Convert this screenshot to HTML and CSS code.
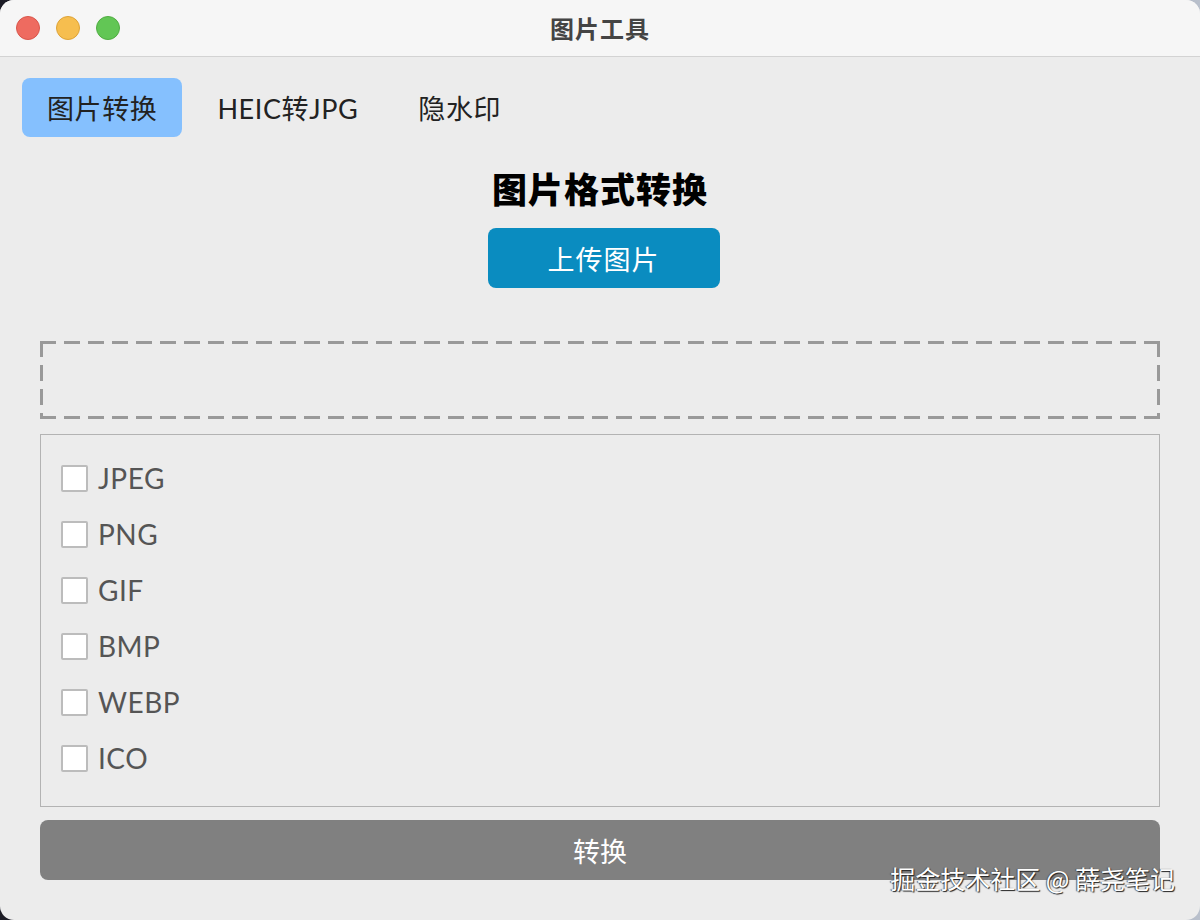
FILE: index.html
```html
<!DOCTYPE html>
<html lang="zh-CN">
<head>
    <meta charset="UTF-8">
    <meta name="viewport" content="width=device-width, initial-scale=1.0">
    <title>图片工具</title>
    <link rel="stylesheet" href="styles.css">
</head>
<body>
    <div class="window">
        <div class="titlebar">
            <div class="lights">
                <span class="light red"></span>
                <span class="light yellow"></span>
                <span class="light green"></span>
            </div>
            <div class="title">图片工具</div>
        </div>

        <div class="content">
            <div class="tabs">
                <div class="tab active">图片转换</div>
                <div class="tab">HEIC转JPG</div>
                <div class="tab">隐水印</div>
            </div>

            <h1 class="heading">图片格式转换</h1>
            <button class="upload-btn">上传图片</button>

            <div class="drop-zone"></div>

            <div class="format-list">
                <label class="format"><span class="check"></span>JPEG</label>
                <label class="format"><span class="check"></span>PNG</label>
                <label class="format"><span class="check"></span>GIF</label>
                <label class="format"><span class="check"></span>BMP</label>
                <label class="format"><span class="check"></span>WEBP</label>
                <label class="format"><span class="check"></span>ICO</label>
            </div>

            <button class="convert-btn">转换</button>
        </div>

        <div class="watermark">掘金技术社区 @ 薛尧笔记</div>
    </div>
</body>
</html>
```

FILE: styles.css
```css
html, body {
    margin: 0;
    padding: 0;
}
body {
    width: 1200px;
    height: 920px;
    background: linear-gradient(90deg, #1c1c26 0%, #4a4f5c 60%, #b9c0cc 100%);
    font-family: Lato, "Noto Sans CJK SC", sans-serif;
    overflow: hidden;
}
.window {
    position: relative;
    width: 1200px;
    height: 920px;
    background: #ececec;
    border-radius: 14px;
    overflow: hidden;
}
.titlebar {
    position: relative;
    height: 56px;
    background: #f6f6f6;
    border-bottom: 1px solid #d3d3d3;
    display: flex;
    align-items: center;
    justify-content: center;
}
.lights {
    position: absolute;
    left: 16px;
    top: 16px;
    display: flex;
    gap: 16px;
}
.light {
    width: 24px;
    height: 24px;
    border-radius: 50%;
    box-sizing: border-box;
}
.red {
    background: #ee6b60;
    border: 1px solid #d9564b;
}
.yellow {
    background: #f6be4f;
    border: 1px solid #dea337;
}
.green {
    background: #62c655;
    border: 1px solid #50ad42;
}
.title {
    font-family: "Noto Sans CJK SC", sans-serif;
    font-weight: 700;
    font-size: 24px;
    color: #444;
    letter-spacing: 1px;
    margin-top: -2px;
}
.content {
    padding: 21px 40px 0 40px;
    display: flex;
    flex-direction: column;
    align-items: center;
}
.tabs {
    align-self: flex-start;
    margin-left: -18px;
    display: flex;
    gap: 10px;
}
.tab {
    height: 59px;
    padding: 0 25px;
    border-radius: 8px;
    display: flex;
    align-items: center;
    font-size: 27px;
    color: #222;
    letter-spacing: 0.6px;
}
.tab.active {
    background: #85c0fe;
}
.heading {
    margin: 30px 0 0 0;
    height: 41px;
    line-height: 41px;
    font-family: "Noto Sans CJK SC", sans-serif;
    font-weight: 900;
    font-size: 35px;
    color: #000;
    letter-spacing: 1px;
}
.upload-btn {
    margin: 20px 0 0 7px;
    width: 232px;
    height: 60px;
    border: none;
    border-radius: 8px;
    background: #0a8cc0;
    color: #fff;
    font-family: "Noto Sans CJK SC", sans-serif;
    font-size: 27px;
    letter-spacing: 1px;
}
/* dashes drawn by hand: the browser's dashed border is too short */
.drop-zone {
    margin-top: 53px;
    width: 100%;
    height: 78px;
    box-sizing: border-box;
    background:
        linear-gradient(90deg, #999 16px, transparent 16px) top left / 24px 3px repeat-x,
        linear-gradient(90deg, #999 16px, transparent 16px) bottom left / 24px 3px repeat-x,
        linear-gradient(180deg, #999 16px, transparent 16px) top left / 3px 24px repeat-y,
        linear-gradient(180deg, #999 16px, transparent 16px) top right / 3px 24px repeat-y;
}
.format-list {
    margin-top: 15px;
    width: 100%;
    box-sizing: border-box;
    border: 1px solid #b3b3b3;
    padding: 15px 20px 20px 20px;
    display: flex;
    flex-direction: column;
}
.format {
    height: 56px;
    display: flex;
    align-items: center;
    font-size: 28px;
    color: #555;
    letter-spacing: 0.5px;
}
.check {
    width: 27px;
    height: 27px;
    box-sizing: border-box;
    border: 2px solid #bcbcbc;
    border-radius: 2px;
    background: #fff;
    margin-right: 10px;
}
.convert-btn {
    margin-top: 13px;
    width: 100%;
    height: 60px;
    border: none;
    border-radius: 8px;
    background: #808080;
    color: #fff;
    font-family: "Noto Sans CJK SC", sans-serif;
    font-size: 27px;
}
.watermark {
    position: absolute;
    right: 25px;
    bottom: 24px;
    font-family: "Noto Sans CJK SC", sans-serif;
    font-size: 25px;
    color: #fff;
    text-shadow: 1px 1px 1px #222, -1px 0 1px #555;
}
```
